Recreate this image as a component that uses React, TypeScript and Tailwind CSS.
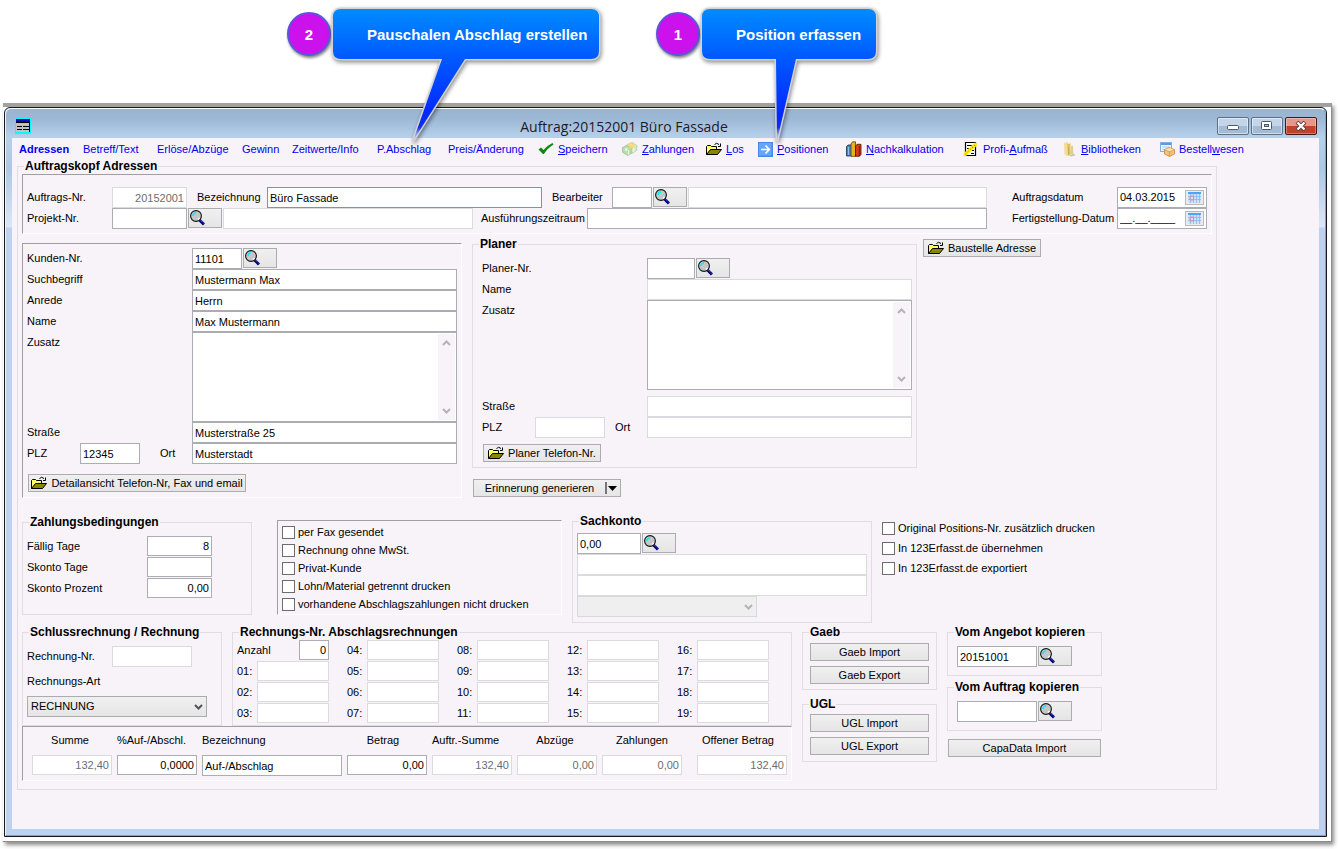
import type { ReactNode } from "react";
import clsx from "clsx";

/* ---------- icons ---------- */

const SearchIcon = () => (
  <svg width="16" height="16" viewBox="0 0 16 16" aria-hidden="true">
    <path d="M9.5 10 L14 14.5" stroke="#00007f" strokeWidth="3" />
    <path d="M10.5 10 L14 13.5" stroke="#8f8fd8" strokeWidth="1" strokeDasharray="1 1" />
    <circle cx="6" cy="6" r="5.4" fill="#c6c6c6" stroke="#111" strokeWidth="1.1" />
    <path d="M3 6 Q3 3 6 3" fill="none" stroke="#00f0ff" strokeWidth="1.6" />
    <path d="M8 9.5 L9.5 8" stroke="#fff" strokeWidth="1.2" />
  </svg>
);

const FolderIcon = () => (
  <svg width="16" height="14" viewBox="0 0 16 14" aria-hidden="true">
    <path d="M0.5 12.5 V4.5 L1.5 3.5 H4.5 L5.5 4.5 H10.5 V7" fill="#ffff66" stroke="#000" />
    <path d="M0.5 12.5 L4.5 7.5 H15.5 L11.5 12.5 Z" fill="#8a8600" stroke="#000" />
    <path d="M8.5 2.5 Q10.5 0 13 2.5" fill="none" stroke="#000" />
    <path d="M14.5 1.5 V4.5 H12" fill="none" stroke="#000" />
  </svg>
);

const CheckIcon = () => (
  <svg width="16" height="16" viewBox="0 0 16 16" aria-hidden="true">
    <path d="M0.5 8.5 L3 6.5 L5.5 9 Q9 4.5 14.5 2 L15.5 3.5 Q9.5 7 6 13 H5 Z" fill="#0a8a10" />
  </svg>
);

const MoneyIcon = () => (
  <svg width="16" height="16" viewBox="0 0 17 17" aria-hidden="true">
    <path d="M0.5 7 L5 4.5 L10 8 L10 13 L6 15.5 L0.5 12 Z" fill="#b9dcae" stroke="#8fb985" strokeWidth="0.7" />
    <path d="M5 4.5 L11 1.5 L16 5 L15.5 10 L10 13.5 L10 8 Z" fill="#d5ecc8" stroke="#9cc48f" strokeWidth="0.7" />
    <path d="M6 3 L10 1 L14 6 L12 8.5 L8.5 7.5 Z" fill="#f8d667" />
    <path d="M9 3 L12 6" stroke="#fff3b0" />
    <circle cx="4.5" cy="9" r="1.5" fill="#eef8e8" />
    <path d="M7 9.5 V14.5 M12.5 7 V11.5" stroke="#f1faec" />
  </svg>
);

const ArrowIcon = () => (
  <svg width="16" height="15" viewBox="0 0 16 15" aria-hidden="true">
    <rect x="1" width="15" height="15" fill="#4a86f0" />
    <rect x="2" y="1" width="12.5" height="12.5" fill="#68a4fb" />
    <path d="M4 7.5 H12 M8.5 3.5 L12.3 7.5 L8.5 11.5" fill="none" stroke="#fff" strokeWidth="1.6" />
  </svg>
);

const BooksIcon = () => (
  <svg width="16" height="16" viewBox="0 0 16 16" aria-hidden="true">
    <path d="M0.5 5.5 L2 4 H5.5 V15 H0.5 Z" fill="#3f86c9" stroke="#1d2f45" strokeWidth="0.8" />
    <path d="M5 3 L6.5 0.8 H9.5 V15.3 H5 Z" fill="#e9b21a" stroke="#5a3d05" strokeWidth="0.8" />
    <path d="M9.5 5 L11 3.3 H15 V13.5 L13.5 15.3 H9.5 Z" fill="#d0401c" stroke="#4a1206" strokeWidth="0.8" />
    <path d="M13.3 5 V15" stroke="#7e1f0b" />
    <path d="M2.5 6 V14" stroke="#8fc1ee" />
  </svg>
);

const MeasureIcon = () => (
  <svg width="16" height="16" viewBox="0 0 16 16" aria-hidden="true">
    <path d="M2.5 1.5 H12.5 V14.5 H2.5 Z" fill="#fff" stroke="#000" strokeWidth="1.2" />
    <path d="M4 4.5 H9 M4 7.5 H8 M8 12.5 H11 M9 9.5 H11" stroke="#000" />
    <path d="M0.5 12.5 L12 1.2 L14.5 4 L3 15 L0.5 14.5 Z" fill="#ffee00" />
    <path d="M2.5 13 L13 3" stroke="#5a5200" strokeDasharray="1 2" />
  </svg>
);

const LibraryIcon = () => (
  <svg width="15" height="16" viewBox="0 0 15 16" aria-hidden="true">
    <path d="M2 2 L6 1 L7 13 L5 15.5 L2.5 13 Z" fill="#f3dd8e" />
    <path d="M5 3 L9 2.5 V13 L6 15 Z" fill="#e3c25f" />
    <path d="M8 3.5 L11 4.5 L12 13 L9 14.5 Z" fill="#f7ebbb" />
    <path d="M6.5 6 V14 M10 5 V13" stroke="#b9a56a" strokeWidth="0.8" />
    <path d="M7 14.5 L12.5 12.5 L13 14.5 L9 15.5 Z" fill="#c5c3c0" />
  </svg>
);

const OrderIcon = () => (
  <svg width="15" height="15" viewBox="0 0 15 15" aria-hidden="true">
    <rect x="0.5" y="0.5" width="11" height="9" fill="#eaf4ff" stroke="#7fb0e6" />
    <path d="M1 2 H11" stroke="#5b9ae0" strokeWidth="2" />
    <path d="M2.5 5 H9 M2.5 7.5 H6" stroke="#a9c9ec" />
    <path d="M4.5 7.5 L9.5 5.5 L14.5 7.5 V12 L9.5 14.6 L4.5 12 Z" fill="#f1c27a" stroke="#b98136" strokeWidth="0.7" />
    <path d="M4.5 7.5 L9.5 9.5 L14.5 7.5 M9.5 9.5 V14.5" fill="none" stroke="#c98f43" strokeWidth="0.7" />
    <path d="M5 7.5 L9.5 6 L14 7.5 L9.5 9.2 Z" fill="#fbe3b4" />
  </svg>
);

const CalendarIcon = () => (
  <svg width="13" height="11" viewBox="0 0 13 11" aria-hidden="true">
    <rect width="13" height="11" fill="#cfe2fb" />
    <rect width="13" height="2" fill="#4ba6f2" />
    <path d="M0 4.5 H13 M0 7.5 H13 M2.5 2 V11 M5.5 2 V11 M8.5 2 V11 M11.5 2 V11" stroke="#8fb4ee" strokeWidth="0.8" />
    <path d="M2 4 H5.5 V8 H2 Z" fill="none" stroke="#e98a9a" />
  </svg>
);

const Chevron = ({ up, color = "#b5b3b8" }: { up?: boolean; color?: string }) => (
  <svg width="9" height="6" viewBox="0 0 9 6" aria-hidden="true">
    <path d={up ? "M1 5 L4.5 1.5 L8 5" : "M1 1 L4.5 4.5 L8 1"} fill="none" stroke={color} strokeWidth="2" />
  </svg>
);

const WindowIcon = () => (
  <svg width="16" height="16" viewBox="0 0 16 16" aria-hidden="true">
    <rect x="0.5" y="0.5" width="15" height="15" fill="#c0c0c0" stroke="#00ffff" />
    <rect x="1" y="1" width="14" height="3" fill="#0000c0" />
    <path d="M1 4.5 H15" stroke="#000" />
    <path d="M2 8.5 H7 M8 8.5 H14 M2 11.5 H7 M8 11.5 H14 M14.5 4 V14" stroke="#000" />
    <path d="M1 14.5 H15" stroke="#00ffff" />
  </svg>
);

/* ---------- form parts ---------- */

interface TextFieldProps {
  id: string;
  className?: string;
  value?: string;
  disabled?: boolean;
  right?: boolean;
  label?: string;
}

const TextField = ({ id, className, value = "", disabled, right, label }: TextFieldProps) => (
  <input
    id={id}
    type="text"
    aria-label={label}
    defaultValue={value}
    disabled={disabled}
    className={clsx(
      "min-w-0 border bg-white px-0.5 outline-none",
      disabled ? "border-[#dcdadf] text-[#6d6d6d]" : "border-[#abadb3] text-black",
      right && "text-right",
      className
    )}
  />
);

const SearchButton = ({ label }: { label: string }) => (
  <button
    type="button"
    aria-label={label}
    className="ml-px h-5 w-[34px] shrink-0 self-start border border-[#acacac] bg-linear-to-b from-[#f0f0f0] to-[#e5e5e5] pl-px"
  >
    <SearchIcon />
  </button>
);

const PushButton = ({ children, className }: { children: ReactNode; className?: string }) => (
  <button
    type="button"
    className={clsx(
      "flex h-[18px] items-center justify-center border border-[#acacac] bg-linear-to-b from-[#f0f0f0] to-[#e5e5e5] whitespace-nowrap",
      className
    )}
  >
    {children}
  </button>
);

const Group = ({ title, className, children }: { title: string; className?: string; children: ReactNode }) => (
  <fieldset className={clsx("min-w-0 border border-[#dfdde2]", className)}>
    <legend className="ml-1.5 px-px text-xs leading-[13px] font-bold">{title}</legend>
    {children}
  </fieldset>
);

const Panel = ({ className, children }: { className?: string; children: ReactNode }) => (
  <div className={clsx("border border-t-[#a09ea3] border-r-white border-b-white border-l-[#a09ea3]", className)}>
    {children}
  </div>
);

const Row = ({ className, children }: { className?: string; children: ReactNode }) => (
  <div className={clsx("flex h-[21px] items-center", className)}>{children}</div>
);

const DateField = ({ id, value }: { id: string; value: string }) => (
  <div className="flex h-[21px] w-[90px] items-center border border-[#abadb3] bg-white pr-0.5">
    <input id={id} type="text" defaultValue={value} className="w-full min-w-0 px-0.5 outline-none" />
    <button
      type="button"
      aria-label="Kalender"
      className="flex h-[15px] w-[19px] shrink-0 items-center justify-center border border-[#b9b9bd] bg-[#ececee]"
    >
      <CalendarIcon />
    </button>
  </div>
);

const Memo = ({ id }: { id: string }) => (
  <div className="flex h-[90px] flex-1 border border-[#abadb3] bg-white p-px">
    <textarea id={id} className="min-w-0 flex-1 resize-none overflow-hidden outline-none" />
    <div className="flex w-[17px] flex-col items-center justify-between bg-[#f7f3f8] py-1.5">
      <Chevron up />
      <Chevron />
    </div>
  </div>
);

const CheckRow = ({ id, className, children }: { id: string; className: string; children: ReactNode }) => (
  <div className={clsx("flex items-center gap-[3px] whitespace-nowrap", className)}>
    <input id={id} type="checkbox" className="size-[13px] appearance-none border border-[#6d6b70] bg-white checked:bg-[#6d6b70]" />
    <label htmlFor={id}>{children}</label>
  </div>
);

/* ---------- callouts ---------- */

interface CalloutProps {
  id: string;
  number: number;
  width: number;
  tail: [number, number, number];
  className: string;
  children: string;
}

// tail holds the left and right foot and the tip, measured from the bubble's left edge
const Callout = ({ id, number, width, tail, className, children }: CalloutProps) => (
  <div className="flex items-center text-[15px] font-bold text-white">
    <div className="flex size-11 items-center justify-center rounded-full border-2 border-[#5a55dc] bg-[#cb12ec] shadow-[1px_2px_3px_rgba(0,0,0,0.5)]">
      {number}
    </div>
    <div className={clsx("relative ml-0.5 flex h-[50px] items-center pl-[34px] whitespace-nowrap", className)}>
      <svg
        width={width + 12}
        height="142"
        viewBox={`-4 -4 ${width + 12} 142`}
        className="absolute -top-1 -left-1 drop-shadow-[1px_2px_2px_rgba(0,0,0,0.45)]"
        aria-hidden="true"
      >
        <defs>
          <linearGradient id={`${id}-fill`} gradientUnits="userSpaceOnUse" x1="0" y1="0" x2="0" y2="132">
            <stop offset="0" stopColor="#008cff" />
            <stop offset="0.38" stopColor="#0058ff" />
            <stop offset="0.8" stopColor="#0028ff" />
            <stop offset="0.9" stopColor="#1030f0" />
            <stop offset="1" stopColor="#d4d6e4" stopOpacity="0.4" />
          </linearGradient>
        </defs>
        <path
          d={`M8 0 H${width - 8} Q${width} 0 ${width} 8 V42 Q${width} 50 ${width - 8} 50 H${tail[1]} L${tail[2]} 132 L${tail[0]} 50 H8 Q0 50 0 42 V8 Q0 0 8 0 Z`}
          fill={`url(#${id}-fill)`}
          stroke="#d3d3d6"
          strokeWidth="3"
          paintOrder="stroke"
        />
      </svg>
      <span className="relative">{children}</span>
    </div>
  </div>
);

/* ---------- data ---------- */

interface MenuEntry {
  text: ReactNode;
  width: string;
  icon?: ReactNode;
  active?: boolean;
}

const menu: MenuEntry[] = [
  { text: "Adressen", width: "w-16", active: true },
  { text: "Betreff/Text", width: "w-[74px]" },
  { text: "Erlöse/Abzüge", width: "w-[85px]" },
  { text: "Gewinn", width: "w-[50px]" },
  { text: "Zeitwerte/Info", width: "w-[85px]" },
  { text: "P.Abschlag", width: "w-[71px]" },
  { text: "Preis/Änderung", width: "w-[90px]" },
  { text: <><u>S</u>peichern</>, width: "w-[84px]", icon: <CheckIcon /> },
  { text: <><u>Z</u>ahlungen</>, width: "w-[84px]", icon: <MoneyIcon /> },
  { text: <><u>L</u>os</>, width: "w-[51px]", icon: <FolderIcon /> },
  { text: <><u>P</u>ositionen</>, width: "w-[89px]", icon: <ArrowIcon /> },
  { text: <><u>N</u>achkalkulation</>, width: "w-[117px]", icon: <BooksIcon /> },
  { text: <>Profi-<u>A</u>ufmaß</>, width: "w-[99px]", icon: <MeasureIcon /> },
  { text: <><u>B</u>ibliotheken</>, width: "w-[98px]", icon: <LibraryIcon /> },
  { text: <>Bestell<u>w</u>esen</>, width: "w-[90px]", icon: <OrderIcon /> },
];

const invoiceColumns = [
  ["01", "02", "03"],
  ["04", "05", "06", "07"],
  ["08", "09", "10", "11"],
  ["12", "13", "14", "15"],
  ["16", "17", "18", "19"],
];

const totals = [
  { id: "summe", label: "Summe", value: "132,40", disabled: true, width: "w-20", align: "text-center pr-1" },
  { id: "aufabschl", label: "%Auf-/Abschl.", value: "0,0000", width: "w-20", align: "text-left" },
  { id: "totalbez", label: "Bezeichnung", value: "Auf-/Abschlag", left: true, width: "w-[140px]", align: "text-left" },
  { id: "betrag", label: "Betrag", value: "0,00", width: "w-20", align: "text-center pr-2" },
  { id: "auftrsumme", label: "Auftr.-Summe", value: "132,40", disabled: true, width: "w-20", align: "text-left" },
  { id: "abzuege", label: "Abzüge", value: "0,00", disabled: true, width: "w-20", align: "text-center pr-1" },
  { id: "zahlungen", label: "Zahlungen", value: "0,00", disabled: true, width: "w-20", align: "text-center" },
  { id: "offen", label: "Offener Betrag", value: "132,40", disabled: true, width: "ml-2.5 w-[90px]", align: "text-center pr-2" },
];

/* ---------- sections ---------- */

const captionButton =
  "flex h-[18px] w-8 items-center justify-center rounded-xs border border-[#5d7086] bg-linear-to-b from-[#c3d5e8] from-50% to-[#a4bbd5] to-50% shadow-[inset_0_0_0_1px_rgba(255,255,255,0.5)]";

const TitleBar = () => (
  <div className="flex h-[29px] items-center pr-2 pl-[9px]">
    <span className="pt-1">
      <WindowIcon />
    </span>
    <h1 className="flex-1 pt-1.5 text-center font-['Open_Sans',sans-serif] text-sm leading-5 text-[#1c1c28]">
      Auftrag:20152001 Büro Fassade
    </h1>
    <div className="flex gap-0.5 pt-1">
      <button type="button" aria-label="Minimieren" className={captionButton}>
        <svg width="12" height="10" viewBox="0 0 12 10">
          <rect x="0.5" y="4.5" width="11" height="4" rx="1" fill="#fff" stroke="#4d5866" />
        </svg>
      </button>
      <button type="button" aria-label="Maximieren" className={captionButton}>
        <svg width="12" height="10" viewBox="0 0 12 10">
          <rect x="0.5" y="0.5" width="10" height="8" rx="1" fill="#fff" stroke="#4d5866" />
          <rect x="3.5" y="3.5" width="4" height="2" fill="#a9c0d9" stroke="#4d5866" />
        </svg>
      </button>
      <button type="button" aria-label="Schließen" className="flex h-[18px] w-8 items-center justify-center rounded-xs border border-[#4a1710] bg-linear-to-b from-[#e5988a] from-50% to-[#c2412b] to-50% shadow-[inset_0_0_0_1px_rgba(255,255,255,0.3)]">
        <svg width="12" height="10" viewBox="0 0 12 10">
          <path d="M2 1 L10 9 M10 1 L2 9" stroke="#5a3a3a" strokeWidth="4" />
          <path d="M2.5 1.5 L9.5 8.5 M9.5 1.5 L2.5 8.5" stroke="#fff" strokeWidth="2.4" />
        </svg>
      </button>
    </div>
  </div>
);

const OrderHead = () => (
  <Panel className="flex justify-between gap-[25px] px-1 pt-3 pb-1">
    <div className="flex-1">
      <Row>
        <label htmlFor="auftragsnr" className="w-[85px]">Auftrags-Nr.</label>
        <TextField id="auftragsnr" value="20152001" disabled right className="h-[21px] w-[75px]" />
        <label htmlFor="bezeichnung" className="w-20 pl-2.5">Bezeichnung</label>
        <input
          id="bezeichnung"
          type="text"
          defaultValue="Büro Fassade"
          className="h-[21px] w-[275px] border border-[#569de5] bg-white px-0.5 outline-none"
        />
        <label htmlFor="bearbeiter" className="w-[70px] pl-2.5">Bearbeiter</label>
        <TextField id="bearbeiter" className="h-[21px] w-10" />
        <SearchButton label="Bearbeiter suchen" />
        <TextField id="bearbeitername" label="Name des Bearbeiters" disabled className="ml-px h-[21px] flex-1" />
      </Row>
      <Row>
        <label htmlFor="projektnr" className="w-[85px]">Projekt-Nr.</label>
        <TextField id="projektnr" className="h-[21px] w-[75px]" />
        <SearchButton label="Projekt suchen" />
        <TextField id="projektname" label="Projektname" disabled className="ml-px h-[21px] w-[250px]" />
        <label htmlFor="zeitraum" className="w-[114px] pl-2">Ausführungszeitraum</label>
        <TextField id="zeitraum" className="h-[21px] flex-1" />
      </Row>
    </div>
    <div>
      <Row>
        <label htmlFor="auftragsdatum" className="w-[105px]">Auftragsdatum</label>
        <DateField id="auftragsdatum" value="04.03.2015" />
      </Row>
      <Row>
        <label htmlFor="fertigdatum" className="w-[105px] whitespace-nowrap">Fertigstellung-Datum</label>
        <DateField id="fertigdatum" value="__.__.____" />
      </Row>
    </div>
  </Panel>
);

const customerRows = [
  { id: "suchbegriff", label: "Suchbegriff", value: "Mustermann Max" },
  { id: "anrede", label: "Anrede", value: "Herrn" },
  { id: "name", label: "Name", value: "Max Mustermann" },
];

const Customer = () => (
  <Panel className="mt-[5px] w-[440px] px-1 pt-1 pb-[5px]">
    <Row>
      <label htmlFor="kundennr" className="w-[165px]">Kunden-Nr.</label>
      <TextField id="kundennr" value="11101" className="h-[21px] w-[50px]" />
      <SearchButton label="Kunde suchen" />
    </Row>
    {customerRows.map((row) => (
      <Row key={row.id}>
        <label htmlFor={row.id} className="w-[165px]">{row.label}</label>
        <TextField id={row.id} value={row.value} className="h-[21px] flex-1" />
      </Row>
    ))}
    <div className="flex">
      <label htmlFor="zusatz" className="w-[165px] leading-[21px]">Zusatz</label>
      <Memo id="zusatz" />
    </div>
    <Row>
      <label htmlFor="strasse" className="w-[165px]">Straße</label>
      <TextField id="strasse" value="Musterstraße 25" className="h-[21px] flex-1" />
    </Row>
    <Row>
      <label htmlFor="plz" className="w-[53px]">PLZ</label>
      <TextField id="plz" value="12345" className="h-[21px] w-[60px]" />
      <label htmlFor="ort" className="w-[52px] pl-5">Ort</label>
      <TextField id="ort" value="Musterstadt" className="h-[21px] flex-1" />
    </Row>
    <PushButton className="mt-2.5 ml-px w-[218px] gap-1">
      <FolderIcon />
      Detailansicht Telefon-Nr, Fax und email
    </PushButton>
  </Panel>
);

const Planner = () => (
  <div className="ml-2.5 w-[445px]">
    <Group title="Planer">
      <div className="pt-[7px] pr-1 pb-[5px] pl-[9px]">
        <Row>
          <label htmlFor="planernr" className="w-[165px]">Planer-Nr.</label>
          <TextField id="planernr" className="h-[21px] w-12" />
          <SearchButton label="Planer suchen" />
        </Row>
        <Row>
          <label htmlFor="planername" className="w-[165px]">Name</label>
          <TextField id="planername" disabled className="h-[21px] flex-1" />
        </Row>
        <div className="flex pb-1.5">
          <label htmlFor="planerzusatz" className="w-[165px] leading-[21px]">Zusatz</label>
          <Memo id="planerzusatz" />
        </div>
        <Row>
          <label htmlFor="planerstrasse" className="w-[165px]">Straße</label>
          <TextField id="planerstrasse" disabled className="h-[21px] flex-1" />
        </Row>
        <Row>
          <label htmlFor="planerplz" className="w-[53px]">PLZ</label>
          <TextField id="planerplz" disabled className="h-[21px] w-[70px]" />
          <label htmlFor="planerort" className="w-[42px] pl-2.5">Ort</label>
          <TextField id="planerort" disabled className="h-[21px] flex-1" />
        </Row>
        <PushButton className="mt-1.5 ml-px w-[118px] gap-1">
          <FolderIcon />
          Planer Telefon-Nr.
        </PushButton>
      </div>
    </Group>
    <PushButton className="mt-[11px] ml-px w-[148px]">
      <span className="flex-1">Erinnerung generieren</span>
      <span className="flex h-3 w-[15px] items-center border-l-2 border-[#77757a] pl-px">
        <svg width="9" height="5" viewBox="0 0 9 5" aria-hidden="true"><path d="M0 0 H9 L4.5 5 Z" fill="#000" /></svg>
      </span>
    </PushButton>
  </div>
);

const Conditions = () => (
  <div className="mt-[17px] flex items-start">
    <Group title="Zahlungsbedingungen" className="mt-px w-[230px]">
      <div className="px-1 pt-[7px] pb-[15px]">
        <Row>
          <label htmlFor="faellig" className="w-[120px]">Fällig Tage</label>
          <TextField id="faellig" value="8" right className="h-5 w-[65px] self-start" />
        </Row>
        <Row>
          <label htmlFor="skontotage" className="w-[120px]">Skonto Tage</label>
          <TextField id="skontotage" right className="h-5 w-[65px] self-start" />
        </Row>
        <Row>
          <label htmlFor="skontoprozent" className="w-[120px]">Skonto Prozent</label>
          <TextField id="skontoprozent" value="0,00" right className="h-5 w-[65px] self-start" />
        </Row>
      </div>
    </Group>
    <Panel className="mt-[5px] ml-[25px] w-[285px] px-1 pt-0.5 pb-px">
      <CheckRow id="fax" className="h-[18px]">per Fax gesendet</CheckRow>
      <CheckRow id="mwst" className="h-[18px]">Rechnung ohne MwSt.</CheckRow>
      <CheckRow id="privat" className="h-[18px]">Privat-Kunde</CheckRow>
      <CheckRow id="lohn" className="h-[18px]">Lohn/Material getrennt drucken</CheckRow>
      <CheckRow id="abschlag" className="h-[18px]">vorhandene Abschlagszahlungen nicht drucken</CheckRow>
    </Panel>
    <Group title="Sachkonto" className="ml-2.5 w-[300px]">
      <div className="px-1 py-[5px]">
        <Row>
          <TextField id="sachkonto" label="Sachkonto" value="0,00" className="h-[21px] w-16" />
          <SearchButton label="Sachkonto suchen" />
        </Row>
        <TextField id="konto1" label="Konto Zeile 1" disabled className="block h-[21px] w-full" />
        <TextField id="konto2" label="Konto Zeile 2" disabled className="block h-[21px] w-full" />
        <div className="relative w-[180px]">
          <select aria-label="Kontoart" disabled className="block h-[21px] w-full appearance-none border border-[#d9d7dc] bg-[#efefef]">
            <option></option>
          </select>
          <span className="pointer-events-none absolute top-2 right-1"><Chevron /></span>
        </div>
      </div>
    </Group>
    <div className="mt-[3px] ml-2.5">
      <CheckRow id="original" className="h-5">Original Positions-Nr. zusätzlich drucken</CheckRow>
      <CheckRow id="uebernehmen" className="h-5">In 123Erfasst.de übernehmen</CheckRow>
      <CheckRow id="exportiert" className="h-5">In 123Erfasst.de exportiert</CheckRow>
    </div>
  </div>
);

const Invoices = () => (
  <div className="w-[770px]">
    <div className="flex gap-2.5">
      <Group title="Schlussrechnung / Rechnung" className="w-[200px]">
        <div className="px-1 pt-[7px] pb-2">
          <Row>
            <label htmlFor="rechnungnr" className="w-[85px]">Rechnung-Nr.</label>
            <TextField id="rechnungnr" disabled className="h-[21px] w-20" />
          </Row>
          <label htmlFor="rechnungsart" className="block leading-[29px]">Rechnungs-Art</label>
          <div className="relative w-[180px]">
            <select
              id="rechnungsart"
              className="block h-[21px] w-full appearance-none border border-[#acacac] bg-linear-to-b from-[#f0f0f0] to-[#e5e5e5] px-[3px]"
            >
              <option>RECHNUNG</option>
            </select>
            <span className="pointer-events-none absolute top-2 right-1"><Chevron color="#55535a" /></span>
          </div>
        </div>
      </Group>
      <Group title="Rechnungs-Nr. Abschlagsrechnungen" className="flex-1">
        <div className="flex gap-[18px] px-1 py-px">
          {invoiceColumns.map((column, i) => (
            <div key={i} className="w-[92px]">
              {i === 0 && (
                <Row className="justify-between">
                  <label htmlFor="anzahl">Anzahl</label>
                  <TextField id="anzahl" value="0" right className="h-5 w-[30px] self-start" />
                </Row>
              )}
              {column.map((nr) => (
                <Row key={nr}>
                  <label htmlFor={`abschlag${nr}`} className="w-5">{nr}:</label>
                  <TextField id={`abschlag${nr}`} disabled className="h-5 flex-1 self-start" />
                </Row>
              ))}
            </div>
          ))}
        </div>
      </Group>
    </div>
    <Panel className="flex gap-[5px] pr-1 pb-1 pl-[9px]">
      {totals.map((t) => (
        <div key={t.id} className={t.width}>
          <label htmlFor={t.id} className={clsx("block pt-[7px] pb-2 leading-[13px] whitespace-nowrap", t.align)}>
            {t.label}
          </label>
          <TextField
            id={t.id}
            value={t.value}
            disabled={t.disabled}
            right={!t.left}
            className={clsx("block w-full", t.left ? "h-[21px]" : "h-5")}
          />
        </div>
      ))}
    </Panel>
  </div>
);

const Transfers = () => (
  <>
    <div className="ml-2.5 w-[135px]">
      <Group title="Gaeb">
        <div className="flex flex-col gap-[5px] px-[7px] pt-1 pb-[5px]">
          <PushButton>Gaeb Import</PushButton>
          <PushButton>Gaeb Export</PushButton>
        </div>
      </Group>
      <Group title="UGL" className="mt-2">
        <div className="flex flex-col gap-[5px] px-[7px] pt-[3px] pb-1.5">
          <PushButton>UGL Import</PushButton>
          <PushButton>UGL Export</PushButton>
        </div>
      </Group>
    </div>
    <div className="ml-2.5 w-[155px]">
      <Group title="Vom Angebot kopieren">
        <Row className="mt-[7px] mb-2 ml-[9px]">
          <TextField id="angebot" label="Angebot" value="20151001" className="h-[21px] w-20" />
          <SearchButton label="Angebot suchen" />
        </Row>
      </Group>
      <Group title="Vom Auftrag kopieren" className="mt-[5px]">
        <Row className="mt-[7px] mb-2 ml-[9px]">
          <TextField id="auftrag" label="Auftrag" className="h-[21px] w-20" />
          <SearchButton label="Auftrag suchen" />
        </Row>
      </Group>
      <PushButton className="mt-2 ml-px w-[153px]">CapaData Import</PushButton>
    </div>
  </>
);

const App = () => {
  return (
    <div className="flex min-h-screen flex-col bg-white font-['Liberation_Sans',Arial,sans-serif] text-[11px] leading-[13px] text-black">
      <header className="relative z-10 flex h-[103px] items-start gap-[57px] pt-[9px] pl-[287px]">
        <Callout id="abschlag-hint" number={2} width={266} tail={[109, 132, 80]} className="w-[266px]">
          Pauschalen Abschlag erstellen
        </Callout>
        <Callout id="position-hint" number={1} width={174} tail={[74, 94, 75]} className="w-[174px]">
          Position erfassen
        </Callout>
      </header>

      <div className="mr-[7px] mb-[7px] ml-[3px] flex flex-1 flex-col border-t-4 border-r border-b border-t-[#a2a1a2] border-r-[#8c8c8c] border-b-[#8c8c8c] bg-white pr-1 pb-1 pl-px shadow-[2px_3px_4px_rgba(0,0,0,0.45)]">
        <div className="flex flex-1 flex-col rounded-t-md border border-[#15181c] bg-[#bcd2ef]">
          <div className="flex flex-1 flex-col rounded-t-md border border-t-white border-r-[#35c3e0] border-b-[#35c3e0] border-l-[#eef4fb] bg-[linear-gradient(#99b4d1_0,#9db8d5_10px,#b7d0ea_28px,#aec8e4_60px,#dbe7f6_118px,#bcd2ef_119px)]">
            <TitleBar />
            <main className="mx-1.5 mb-1.5 flex-1 bg-[#f7f3f8]">
              <nav className="flex h-[22px] items-center pl-[7px] text-[#0000f0]">
                {menu.map((entry, i) => (
                  <button
                    key={i}
                    type="button"
                    className={clsx(
                      "flex shrink-0 items-center gap-1 whitespace-nowrap",
                      entry.width,
                      entry.active && "font-bold"
                    )}
                  >
                    {entry.icon}
                    <span>{entry.text}</span>
                  </button>
                ))}
              </nav>
              <Group title="Auftragskopf Adressen" className="mr-[102px] ml-[5px]">
                <div className="px-1 pt-px pb-2">
                  <OrderHead />
                  <div className="mt-1 flex items-start">
                    <Customer />
                    <Planner />
                    <PushButton className="mt-px ml-1.5 w-[118px] gap-1">
                      <FolderIcon />
                      Baustelle Adresse
                    </PushButton>
                  </div>
                  <Conditions />
                  <div className="mt-[3px] flex items-start">
                    <Invoices />
                    <Transfers />
                  </div>
                </div>
              </Group>
            </main>
          </div>
        </div>
      </div>
    </div>
  );
};

export default App;
